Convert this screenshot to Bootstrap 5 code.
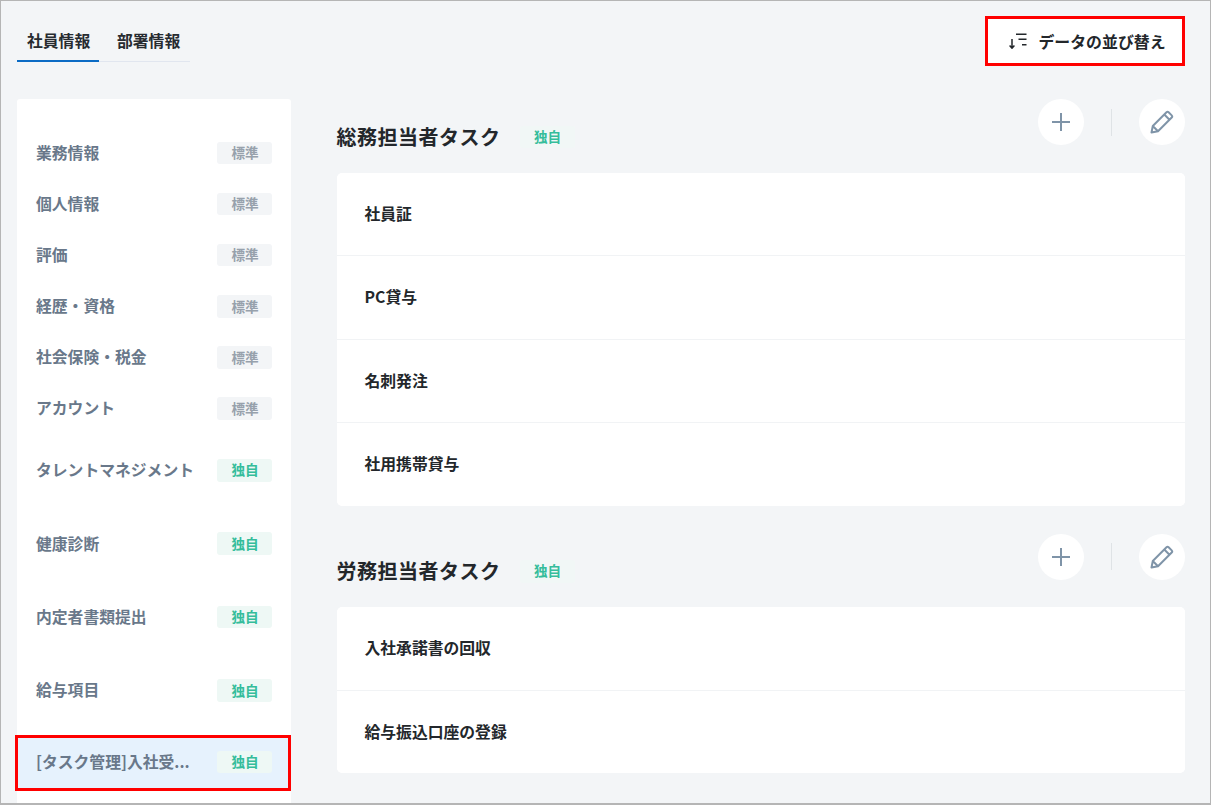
<!DOCTYPE html>
<html lang="ja">
<head>
<meta charset="utf-8">
<title>データの並び替え</title>
<link href="https://cdn.jsdelivr.net/npm/bootstrap@5.3.0/dist/css/bootstrap.min.css" rel="stylesheet">
<style>
html,body{height:100%;margin:0;overflow:hidden}
body{font-family:"Noto Sans CJK JP","Noto Sans",sans-serif;background:#fff}
.frame{width:1211px;height:805px;border:1px solid #b5b5b5;border-bottom-width:2px;background:#f3f5f7;overflow:hidden;padding:15px 25px 0 16px}
.topbar{height:83px;align-items:flex-start}
.tabset{margin-top:9px;border-bottom:1px solid #e1e6ef;height:37px;width:173px}
.tabitem{font-size:15.8px;font-weight:700;color:#272b30;line-height:20px;padding:6px 10px 0;height:37px;white-space:nowrap}
.tabitem.on{width:82px;border-bottom:2px solid #0b6bc4;padding-left:10px}
.tabitem.off{padding-left:18px}
.sortbtn{width:200px;height:50px;border:3px solid #f00;background:#fff;font-size:15.9px;font-weight:700;color:#23272b;border-radius:0;gap:11px;padding:1px 0 0 5px}
.sortbtn svg{margin-top:-2px}
.layout{gap:45.5px}
.sidenav{width:274px;height:720px;background:#fff;border-radius:3px 3px 0 0;padding:28.5px 0 0;flex:none}
.navline{height:51.1px;padding:0 19px;font-size:15.8px;font-weight:700;color:#69788a}
.navline.tall{height:73.4px}
.navline.tall.first{margin-top:-.5px}
.navline .lbl{white-space:nowrap;margin-bottom:.4px}
.navcur{height:56px;margin-left:-2px;width:276px;padding:0 16px 2px 18px;background:#e6f2fd;border:3px solid #f00;margin-top:8px}
.tagbox{width:55px;height:22.5px;border-radius:3px;font-size:13.6px;font-weight:700;flex:none;line-height:1;padding-left:1px}
.tagstd{background:#f3f5f7;color:#97a1ac}
.tagown{background:#eef8f5;color:#35bd9b}
.mainpane{width:848.5px;flex:none}
.sechead{height:73.5px;align-items:flex-start}
.sectitle{font-size:20px;font-weight:700;color:#23272b;margin:0;line-height:28px;padding-top:23.6px;letter-spacing:.5px}
.sectag{margin-left:19px;margin-top:26.5px;background:#f1f7f6}
.roundbtn{width:46px;height:46px;border-radius:50%;background:#fff;border:0;padding:0;color:#7f94a8}
.vsep{width:1px;height:27px;background:#dfe3e6;margin:0 27.25px}
.taskcard{background:#fff;border:0;border-radius:5px;overflow:hidden;margin-bottom:28px}
.taskrow{height:83.5px;padding:0 28px;font-size:15.8px;font-weight:700;color:#23272b;border:0;border-bottom:1px solid #f1f3f5;background:#fff}
.taskrow:last-child{border-bottom:0;height:82.5px}
</style>
</head>
<body>
<div class="frame">
  <div class="d-flex justify-content-between topbar">
    <div class="d-flex tabset">
      <div class="tabitem on">社員情報</div>
      <div class="tabitem off">部署情報</div>
    </div>
    <button type="button" class="btn sortbtn d-flex align-items-center justify-content-center">
      <svg width="18" height="16" viewBox="0 0 18 16" fill="none" stroke="#23272b" stroke-width="1.5"><path d="M3 6v9.300M.6 12.600L3 15.200l2.400-2.600"/><path d="M7 1.200h10.500M9.500 6.200h8M13 11.800h4.500"/></svg>
      <span>データの並び替え</span>
    </button>
  </div>
  <div class="d-flex layout">
    <nav class="sidenav">
      <div class="navline d-flex align-items-center justify-content-between"><span class="lbl">業務情報</span><span class="tagbox tagstd d-flex align-items-center justify-content-center">標準</span></div>
      <div class="navline d-flex align-items-center justify-content-between"><span class="lbl">個人情報</span><span class="tagbox tagstd d-flex align-items-center justify-content-center">標準</span></div>
      <div class="navline d-flex align-items-center justify-content-between"><span class="lbl">評価</span><span class="tagbox tagstd d-flex align-items-center justify-content-center">標準</span></div>
      <div class="navline d-flex align-items-center justify-content-between"><span class="lbl">経歴・資格</span><span class="tagbox tagstd d-flex align-items-center justify-content-center">標準</span></div>
      <div class="navline d-flex align-items-center justify-content-between"><span class="lbl">社会保険・税金</span><span class="tagbox tagstd d-flex align-items-center justify-content-center">標準</span></div>
      <div class="navline d-flex align-items-center justify-content-between"><span class="lbl">アカウント</span><span class="tagbox tagstd d-flex align-items-center justify-content-center">標準</span></div>
      <div class="navline tall first d-flex align-items-center justify-content-between"><span class="lbl">タレントマネジメント</span><span class="tagbox tagown d-flex align-items-center justify-content-center">独自</span></div>
      <div class="navline tall d-flex align-items-center justify-content-between"><span class="lbl">健康診断</span><span class="tagbox tagown d-flex align-items-center justify-content-center">独自</span></div>
      <div class="navline tall d-flex align-items-center justify-content-between"><span class="lbl">内定者書類提出</span><span class="tagbox tagown d-flex align-items-center justify-content-center">独自</span></div>
      <div class="navline tall d-flex align-items-center justify-content-between"><span class="lbl">給与項目</span><span class="tagbox tagown d-flex align-items-center justify-content-center">独自</span></div>
      <div class="navline navcur d-flex align-items-center justify-content-between"><span class="lbl">[タスク管理]入社受...</span><span class="tagbox tagown d-flex align-items-center justify-content-center">独自</span></div>
    </nav>
    <main class="mainpane">
      <div class="d-flex justify-content-between sechead">
        <div class="d-flex align-items-start"><h2 class="sectitle">総務担当者タスク</h2><span class="tagbox tagown sectag d-flex align-items-center justify-content-center">独自</span></div>
        <div class="d-flex align-items-center">
          <button type="button" class="roundbtn d-flex align-items-center justify-content-center"><svg width="20" height="20" viewBox="0 0 20 20" fill="none" stroke="currentColor" stroke-width="2"><path d="M10 1v18M1 10h18"/></svg></button>
          <span class="vsep"></span>
          <button type="button" class="roundbtn d-flex align-items-center justify-content-center"><svg width="24" height="24" viewBox="0 0 24 24" fill="none" stroke="currentColor" stroke-width="2" stroke-linejoin="round"><path d="M1.500 22.500l1.300-6.500L16.500 2.300a1.500 1.500 0 0 1 2.100 0l3.100 3.100a1.500 1.500 0 0 1 0 2.100L8 21.200zM2.800 16L8 21.200M14.300 4.500l5.200 5.200"/></svg></button>
        </div>
      </div>
      <div class="list-group taskcard">
        <div class="list-group-item taskrow d-flex align-items-center">社員証</div>
        <div class="list-group-item taskrow d-flex align-items-center">PC貸与</div>
        <div class="list-group-item taskrow d-flex align-items-center">名刺発注</div>
        <div class="list-group-item taskrow d-flex align-items-center">社用携帯貸与</div>
      </div>
      <div class="d-flex justify-content-between sechead">
        <div class="d-flex align-items-start"><h2 class="sectitle">労務担当者タスク</h2><span class="tagbox tagown sectag d-flex align-items-center justify-content-center">独自</span></div>
        <div class="d-flex align-items-center">
          <button type="button" class="roundbtn d-flex align-items-center justify-content-center"><svg width="20" height="20" viewBox="0 0 20 20" fill="none" stroke="currentColor" stroke-width="2"><path d="M10 1v18M1 10h18"/></svg></button>
          <span class="vsep"></span>
          <button type="button" class="roundbtn d-flex align-items-center justify-content-center"><svg width="24" height="24" viewBox="0 0 24 24" fill="none" stroke="currentColor" stroke-width="2" stroke-linejoin="round"><path d="M1.500 22.500l1.300-6.500L16.500 2.300a1.500 1.500 0 0 1 2.100 0l3.100 3.100a1.500 1.500 0 0 1 0 2.100L8 21.200zM2.800 16L8 21.200M14.300 4.500l5.200 5.200"/></svg></button>
        </div>
      </div>
      <div class="list-group taskcard">
        <div class="list-group-item taskrow d-flex align-items-center">入社承諾書の回収</div>
        <div class="list-group-item taskrow d-flex align-items-center">給与振込口座の登録</div>
      </div>
    </main>
  </div>
</div>
</body>
</html>
